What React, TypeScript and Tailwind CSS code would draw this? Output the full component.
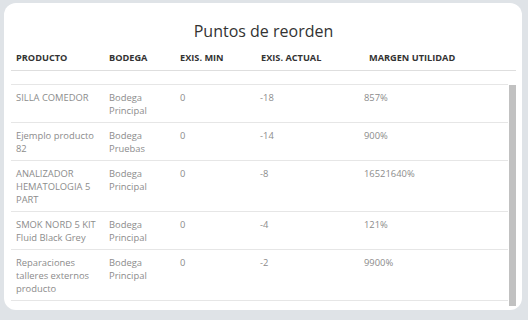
import React from "react";

type Row = {
  producto: string;
  bodega: string;
  min: string;
  actual: string;
  margen: string;
};

const ROWS: Row[] = [
  { producto: "SILLA COMEDOR", bodega: "Bodega Principal", min: "0", actual: "-18", margen: "857%" },
  { producto: "Ejemplo producto 82", bodega: "Bodega Pruebas", min: "0", actual: "-14", margen: "900%" },
  { producto: "ANALIZADOR HEMATOLOGIA 5 PART", bodega: "Bodega Principal", min: "0", actual: "-8", margen: "16521640%" },
  { producto: "SMOK NORD 5 KIT Fluid Black Grey", bodega: "Bodega Principal", min: "0", actual: "-4", margen: "121%" },
  { producto: "Reparaciones talleres externos producto", bodega: "Bodega Principal", min: "0", actual: "-2", margen: "9900%" },
];

export default function App() {
  return (
    <div className="h-[320px] w-[528px] bg-[#dfe3e7] pl-[4px] pr-[6px] pt-[3px] font-['Open_Sans',sans-serif]">
      <div className="flex h-[307px] flex-col rounded-[12px] bg-white px-[7px] pr-[6px]">
        <h2 className="mt-[17px] text-center text-[16px] leading-[22px] text-[#333]">Puntos de reorden</h2>

        <div className="mt-[10px] flex h-[19px] border-b border-[#dedede] text-[9.2px] font-bold uppercase leading-[12px] text-[#333]">
          <div className="w-[98px] pl-[5px]">Producto</div>
          <div className="w-[71px]">Bodega</div>
          <div className="w-[81px]">Exis. Min</div>
          <div className="w-[108px]">Exis. Actual</div>
          <div className="flex-1">Margen utilidad</div>
        </div>

        <div className="flex h-[236px]">
          <div className="flex-1 overflow-hidden pt-[13px]">
            <div className="border-t border-[#e6e6e6]">
              {ROWS.map((row) => (
                <div
                  key={row.producto}
                  className="flex border-b border-[#e6e6e6] pb-[5px] pt-[6px] text-[9.4px] leading-[13px] text-[#8c8c8c]"
                >
                  <div className="w-[98px] pl-[5px] pr-[4px]">{row.producto}</div>
                  <div className="w-[71px] pr-[4px]">{row.bodega}</div>
                  <div className="w-[80px]">{row.min}</div>
                  <div className="w-[104px]">{row.actual}</div>
                  <div className="flex-1">{row.margen}</div>
                </div>
              ))}
            </div>
          </div>
          <div className="ml-[1px] w-[7px] pt-[14px]">
            <div className="h-[221px] bg-[#c1c1c1]" />
          </div>
        </div>
      </div>
    </div>
  );
}
